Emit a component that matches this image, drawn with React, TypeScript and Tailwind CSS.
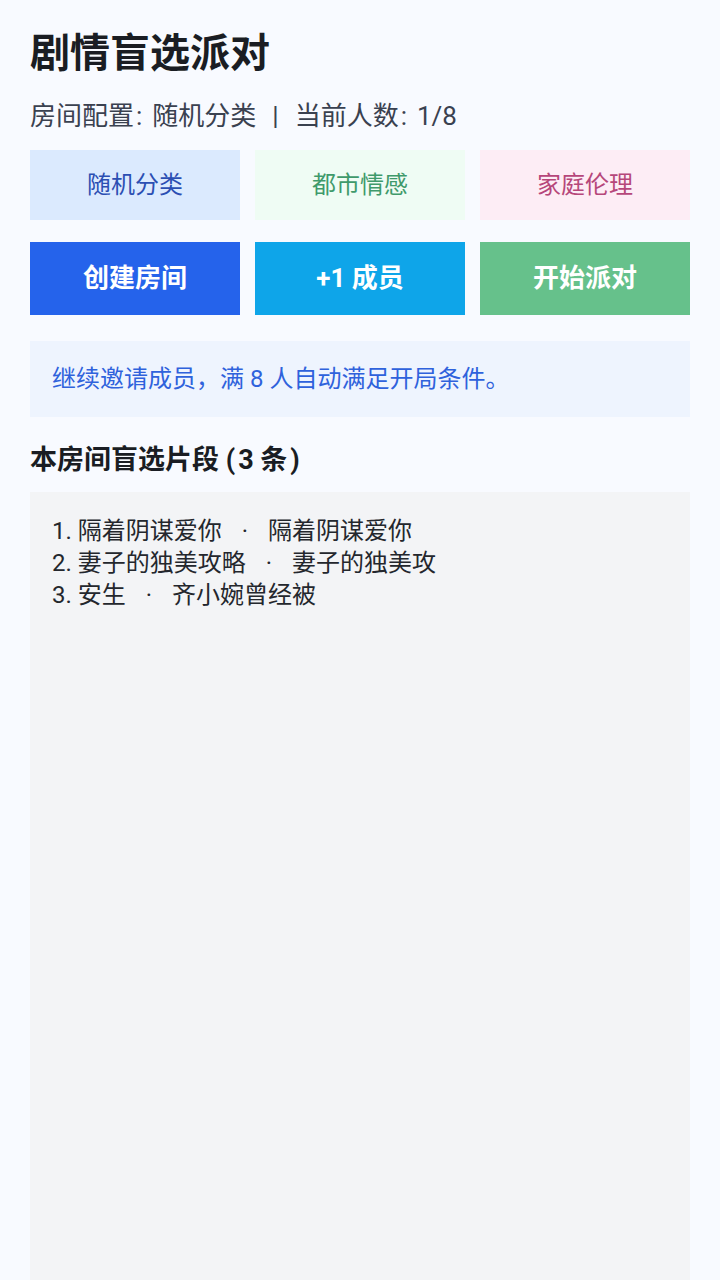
import React from 'react';

// Tags describing the room's category mix
const tags = [
  { id: 'random', text: '随机分类', className: 'bg-[#dbeafe] text-[#2b4fb3]' },
  { id: 'urban', text: '都市情感', className: 'bg-[#effcf4] text-[#3f9a6b]' },
  { id: 'family', text: '家庭伦理', className: 'bg-[#fdedf5] text-[#b6477a]' },
];

const actions = [
  { id: 'create', text: '创建房间', className: 'bg-[#2563eb]' },
  { id: 'add', text: '+1 成员', className: 'bg-[#0ea5e9]' },
  { id: 'start', text: '开始派对', className: 'bg-[#66c18b]' },
];

const clips = [
  { title: '隔着阴谋爱你', snippet: '隔着阴谋爱你' },
  { title: '妻子的独美攻略', snippet: '妻子的独美攻' },
  { title: '安生', snippet: '齐小婉曾经被' },
];

export default function App() {
  return (
    <div
      className="min-h-screen bg-[#f8faff] px-[30px] pt-[28px] flex flex-col"
      style={{ fontFamily: 'Roboto, "Noto Sans CJK SC", sans-serif' }}
    >
      <h1 className="text-[40px] leading-[52px] font-bold text-[#1a1d23]">剧情盲选派对</h1>
      <p className="mt-[20px] text-[26px] leading-[32px] text-[#3a4150]">
        房间配置<span className="ml-[2px] mr-[10px]">:</span>随机分类
        <span className="mx-[16px]">|</span>
        当前人数<span className="ml-[2px] mr-[10px]">:</span>1/8
      </p>

      <div className="mt-[18px] grid grid-cols-3 gap-[15px]">
        {tags.map(tag => (
          <div
            key={tag.id}
            className={`h-[70px] flex items-center justify-center text-[24px] ${tag.className}`}
          >
            {tag.text}
          </div>
        ))}
      </div>

      <div className="mt-[22px] grid grid-cols-3 gap-[15px]">
        {actions.map(action => (
          <button
            key={action.id}
            className={`h-[73px] flex items-center justify-center text-[26px] font-bold text-white ${action.className}`}
          >
            {action.text}
          </button>
        ))}
      </div>

      <div className="mt-[26px] h-[76px] px-[22px] flex items-center bg-[#eef4fe] text-[24px] text-[#2f62dc]">
        继续邀请成员，满 8 人自动满足开局条件。
      </div>

      <h2 className="mt-[25px] text-[27px] leading-[36px] font-bold text-[#1a1d23]">
        本房间盲选片段 (<span className="ml-[3px]">3 条</span><span className="ml-[3px]">)</span>
      </h2>

      <div className="mt-[14px] flex-1 min-h-[790px] bg-[#f3f4f6] px-[22px] pt-[23px] text-[24px] leading-[32px] text-[#24272d]">
        {clips.map((clip, i) => (
          <div key={clip.title}>
            {i + 1}. {clip.title}
            <span className="mx-[20px]">·</span>
            {clip.snippet}
          </div>
        ))}
      </div>
    </div>
  );
}
